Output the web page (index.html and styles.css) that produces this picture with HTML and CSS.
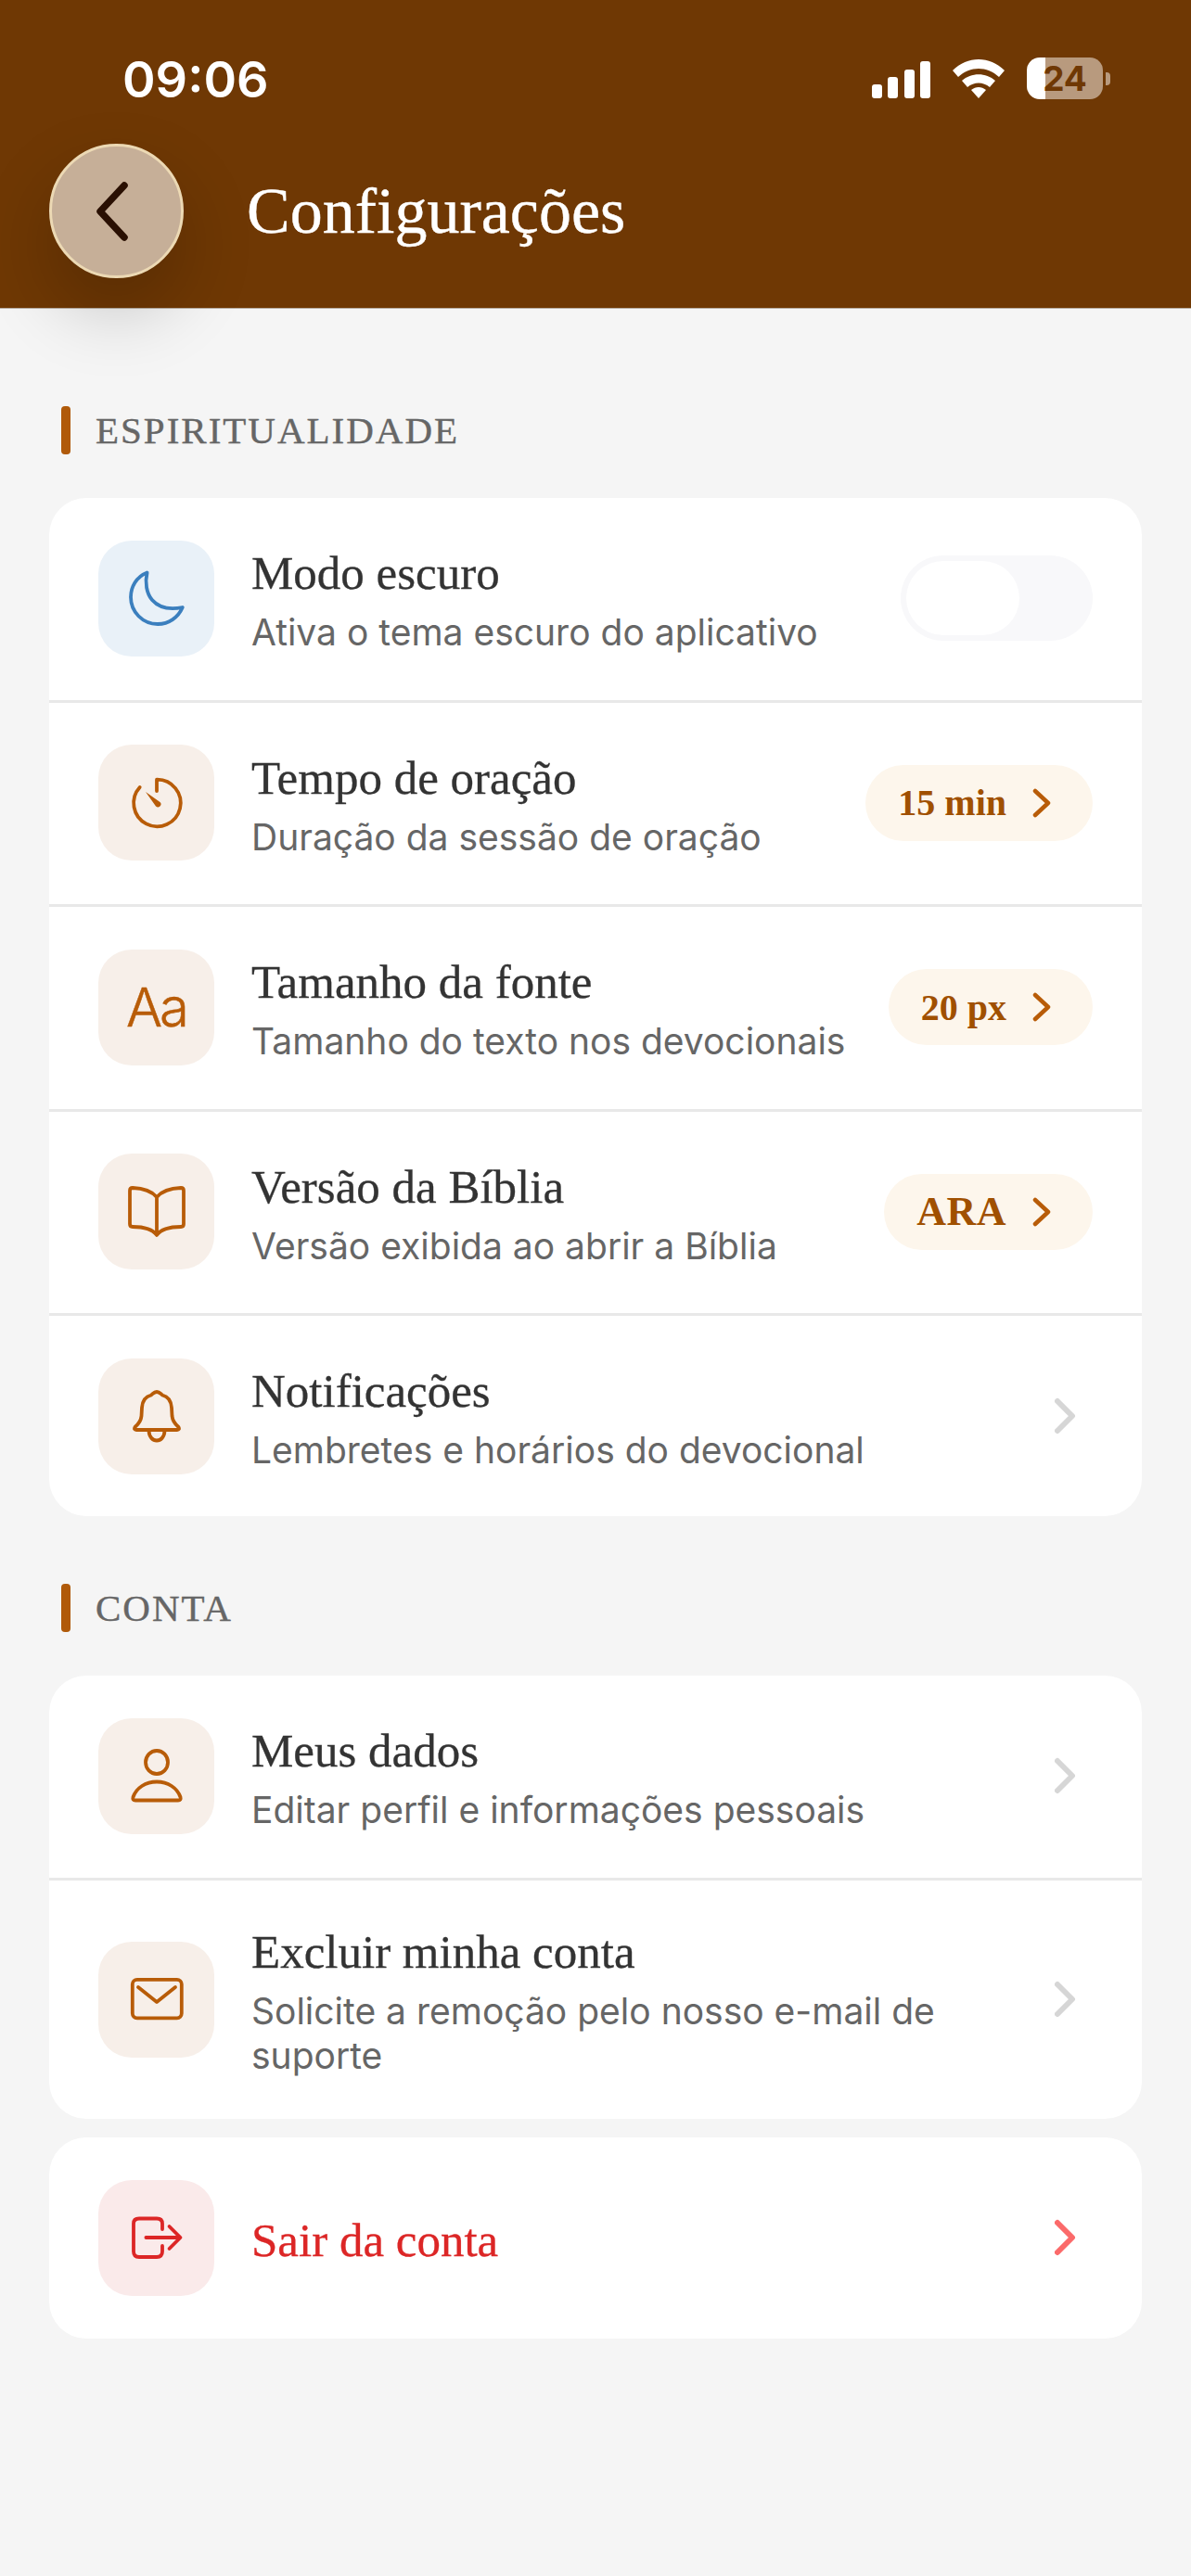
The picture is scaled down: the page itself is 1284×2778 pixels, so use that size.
FILE: index.html

```html
<!DOCTYPE html>
<html lang="pt-BR">
<head>
    <meta charset="UTF-8">
    <meta name="viewport" content="width=device-width, initial-scale=1.0">
    <title>Configurações</title>
    <link rel="stylesheet" href="styles.css">
</head>
<body>

    <header class="header">
        <div class="status-bar">
            <span class="time">09:06</span>
            <div class="status-icons">
                <div class="signal">
                    <span class="bar bar-1"></span>
                    <span class="bar bar-2"></span>
                    <span class="bar bar-3"></span>
                    <span class="bar bar-4"></span>
                </div>
                <svg class="wifi" width="56" height="42" viewBox="0 0 56 42">
                    <path d="M0 12 C16 -4 40 -4 56 12 L50 19 C37 7 19 7 6 19 Z" fill="#fff"/>
                    <path d="M10 23 C20 14 36 14 46 23 L40 30 C33 24 23 24 16 30 Z" fill="#fff"/>
                    <path d="M20 33 C25 29 31 29 36 33 L28 42 Z" fill="#fff"/>
                </svg>
                <div class="battery">
                    <div class="battery-body">24</div>
                    <span class="battery-cap"></span>
                </div>
            </div>
        </div>
        <div class="title-bar">
            <button class="back-btn" type="button">
                <svg class="back-icon" width="44" height="68" viewBox="0 0 44 68">
                    <path d="M35 6 L9 34 L35 62" fill="none" stroke="#2a1003" stroke-width="7.5" stroke-linecap="round" stroke-linejoin="round"/>
                </svg>
            </button>
            <h1>Configurações</h1>
        </div>
    </header>

    <main class="content">
        <div class="section-title"><span class="section-mark"></span>ESPIRITUALIDADE</div>
        <section class="card">
            <div class="row">
                <div class="icon-box blue">
                    <svg class="icon stroke-blue" viewBox="0 0 72 72">
                        <path d="M25.6 8.5 C14 13 8 24 8 35 C8 51 21 64 37 64 C49 64 59 57 63.8 46 C49 49 38 46 31 38 C25 31 23 19 25.6 8.5 Z"/>
                    </svg>
                </div>
                <div class="row-text">
                    <div class="row-title">Modo escuro</div>
                    <div class="row-sub">Ativa o tema escuro do aplicativo</div>
                </div>
                <div class="toggle"><span class="toggle-thumb"></span></div>
            </div>
            <div class="row">
                <div class="icon-box">
                    <svg class="icon" viewBox="0 0 72 72">
                        <path d="M17.7 19 A25.3 25.3 0 1 0 36 10.7 V23"/>
                        <path class="solid" d="M24 24 L39.5 35 A3 3 0 0 1 35 39.5 Z"/>
                    </svg>
                </div>
                <div class="row-text">
                    <div class="row-title">Tempo de oração</div>
                    <div class="row-sub">Duração da sessão de oração</div>
                </div>
                <div class="pill">15 min
                    <svg class="chevron" viewBox="0 0 20 32"><path d="M3 3 L17 16 L3 29"/></svg>
                </div>
            </div>
            <div class="row">
                <div class="icon-box"><span class="aa">Aa</span></div>
                <div class="row-text">
                    <div class="row-title">Tamanho da fonte</div>
                    <div class="row-sub">Tamanho do texto nos devocionais</div>
                </div>
                <div class="pill">20 px
                    <svg class="chevron" viewBox="0 0 20 32"><path d="M3 3 L17 16 L3 29"/></svg>
                </div>
            </div>
            <div class="row">
                <div class="icon-box">
                    <svg class="icon" viewBox="0 0 72 72">
                        <path d="M36 20 C31 14 22 10.5 10 10 Q7 10 7 13 V49 Q7 52 10 52 C22 52 31 54 36 61 C41 54 50 52 62 52 Q65 52 65 49 V13 Q65 10 62 10 C50 10.5 41 14 36 20 Z M36 20 V60"/>
                    </svg>
                </div>
                <div class="row-text">
                    <div class="row-title">Versão da Bíblia</div>
                    <div class="row-sub">Versão exibida ao abrir a Bíblia</div>
                </div>
                <div class="pill pill-caps">ARA
                    <svg class="chevron" viewBox="0 0 20 32"><path d="M3 3 L17 16 L3 29"/></svg>
                </div>
            </div>
            <div class="row">
                <div class="icon-box">
                    <svg class="icon" viewBox="0 0 72 72">
                        <path d="M36 10 C33 10 32 12 30 13.5 C24 15 20.5 20 20 27 L19.5 36 C19 41 16 45 12.5 48 Q11 51 14 51 H58 Q61 51 59.5 48 C56 45 53 41 52.5 36 L52 27 C51.5 20 48 15 42 13.5 C40 12 39 10 36 10 Z"/>
                        <path d="M27.5 52 C28 66 44 66 44.5 52"/>
                    </svg>
                </div>
                <div class="row-text">
                    <div class="row-title">Notificações</div>
                    <div class="row-sub">Lembretes e horários do devocional</div>
                </div>
                <svg class="chevron-end" viewBox="0 0 24 40"><path d="M3 4 L19 20 L3 36"/></svg>
            </div>
        </section>

        <div class="section-title"><span class="section-mark"></span>CONTA</div>
        <section class="card">
            <div class="row">
                <div class="icon-box">
                    <svg class="icon" viewBox="0 0 72 72">
                        <ellipse cx="36" cy="21.5" rx="12" ry="12.5"/>
                        <path d="M13 62.5 H59 Q62.5 62.5 61.5 59 C58 49 48 42.5 36 42.5 C24 42.5 14 49 10.5 59 Q9.5 62.5 13 62.5 Z"/>
                    </svg>
                </div>
                <div class="row-text">
                    <div class="row-title">Meus dados</div>
                    <div class="row-sub">Editar perfil e informações pessoais</div>
                </div>
                <svg class="chevron-end" viewBox="0 0 24 40"><path d="M3 4 L19 20 L3 36"/></svg>
            </div>
            <div class="row row-tall">
                <div class="icon-box">
                    <svg class="icon" viewBox="0 0 72 72">
                        <rect x="9.8" y="14.8" width="53" height="41.5" rx="5"/>
                        <path d="M16 23 L36 39 L56 23"/>
                    </svg>
                </div>
                <div class="row-text">
                    <div class="row-title">Excluir minha conta</div>
                    <div class="row-sub">Solicite a remoção pelo nosso e-mail de suporte</div>
                </div>
                <svg class="chevron-end" viewBox="0 0 24 40"><path d="M3 4 L19 20 L3 36"/></svg>
            </div>
        </section>

        <section class="card card-logout">
            <div class="row">
                <div class="icon-box red">
                    <svg class="icon stroke-red" viewBox="0 0 72 72">
                        <path d="M42 27 V21 Q42 15.5 36 15.5 H17 Q11 15.5 11 21 V51 Q11 57 17 57 H36 Q42 57 42 51 V45"/>
                        <path d="M24.4 36 H61 M49.5 24 L61.5 36 L49.5 48"/>
                    </svg>
                </div>
                <div class="row-text">
                    <div class="row-title logout-text">Sair da conta</div>
                </div>
                <svg class="chevron-end chevron-red" viewBox="0 0 24 40"><path d="M3 4 L19 20 L3 36"/></svg>
            </div>
        </section>
    </main>

</body>
</html>
```

FILE: styles.css

```css
* {
    box-sizing: border-box;
}
body {
    margin: 0;
    background: #f5f5f5;
    font-family: Inter, "Liberation Sans", sans-serif;
    color: #333;
}

/* header */
.header {
    height: 333px;
    background: #6f3804;
    border-bottom: 1px solid #b9aea3;
    color: #fff;
}
.status-bar {
    height: 155px;
    display: flex;
    justify-content: space-between;
    padding: 62px 87px 0 132px;
}
.time {
    margin-top: 1px;
    font-size: 54px;
    font-weight: 600;
    line-height: 46px;
}
.status-icons {
    display: flex;
    align-items: flex-start;
    gap: 24px;
    height: 46px;
}
.signal {
    display: flex;
    align-items: flex-end;
    gap: 6.5px;
    height: 41px;
    margin-top: 3px;
}
.bar {
    width: 11px;
    background: #fff;
    border-radius: 3px;
}
.bar-1 { height: 15px; }
.bar-2 { height: 23px; }
.bar-3 { height: 31px; }
.bar-4 { height: 40px; }
.wifi {
    margin-top: 2px;
}
.battery {
    display: flex;
    align-items: center;
    gap: 3px;
}
.battery-body {
    width: 82px;
    height: 45px;
    border-radius: 14px;
    background: linear-gradient(to right, #fff 24%, #b89a7e 24%);
    color: #6f3804;
    font-size: 37px;
    font-weight: 700;
    line-height: 45px;
    text-align: center;
}
.battery-cap {
    width: 5px;
    height: 14px;
    background: #b89a7e;
    border-radius: 0 4px 4px 0;
}
.title-bar {
    display: flex;
    align-items: center;
    padding-left: 53px;
    gap: 68px;
}
.back-btn {
    width: 145px;
    height: 145px;
    flex-shrink: 0;
    display: flex;
    align-items: center;
    justify-content: center;
    padding: 0;
    border: 3px solid #ecd9b4;
    border-radius: 50%;
    background: #c6af98;
    box-shadow: 0 36px 80px rgba(0, 0, 0, 0.2);
}
.back-icon {
    margin-right: 10px;
}
h1 {
    margin: 0;
    font-family: "Liberation Serif", serif;
    font-size: 70px;
    font-weight: 400;
    -webkit-text-stroke: 0.4px #fff;
}

/* sections */
.content {
    padding: 105px 53px 0;
}
.section-title {
    display: flex;
    align-items: center;
    gap: 27px;
    height: 52px;
    margin: 0 0 47px 13px;
    font-family: "Liberation Serif", serif;
    font-size: 41px;
    letter-spacing: 2px;
    color: #666;
    -webkit-text-stroke: 0.4px #666;
}
.section-mark {
    width: 10px;
    height: 52px;
    background: #b05a0a;
    border-radius: 4px;
}
.card {
    background: #fff;
    border-radius: 40px;
    margin-bottom: 73px;
}
.card-logout {
    margin-top: -53px;
}
.row {
    display: flex;
    align-items: center;
    height: 220.5px;
    padding: 0 53px 1px;
    border-bottom: 3px solid #e8e8e8;
}
.row:last-child {
    height: 216px;
    padding-bottom: 0;
    border-bottom: none;
}
.row-tall:last-child {
    height: 257px;
}
.card-logout .row:last-child {
    height: 217px;
}
.icon-box {
    width: 125px;
    height: 125px;
    flex-shrink: 0;
    display: flex;
    align-items: center;
    justify-content: center;
    background: #f7efe9;
    border-radius: 36px;
}
.icon-box.blue {
    background: #e9f1f8;
}
.icon-box.red {
    background: #faeaea;
}
.icon {
    width: 72px;
    height: 72px;
    fill: none;
    stroke: #b85c08;
    stroke-width: 3.8;
    stroke-linecap: round;
    stroke-linejoin: round;
}
.icon .solid {
    fill: #b85c08;
    stroke: none;
}
.stroke-blue {
    stroke: #3b7fbe;
}
.stroke-red {
    stroke: #dc2626;
}
.aa {
    font-size: 58px;
    font-weight: 300;
    letter-spacing: -3px;
    color: #b85c08;
    -webkit-text-stroke: 0.5px #b85c08;
}
.row-text {
    flex: 1;
    min-width: 0;
    padding: 5px 0 0 40px;
}
.row-title {
    font-family: "Liberation Serif", serif;
    font-size: 51px;
    line-height: 58px;
    color: #333;
    -webkit-text-stroke: 0.3px #333;
}
.row-sub {
    margin-top: 11px;
    font-size: 39px;
    line-height: 48px;
    color: #666;
}
.logout-text {
    color: #dc2626;
    -webkit-text-stroke-color: #dc2626;
}

/* toggle and value pills */
.toggle {
    width: 207px;
    height: 92px;
    flex-shrink: 0;
    padding: 6px;
    background: #f8f8fa;
    border-radius: 46px;
}
.toggle-thumb {
    display: block;
    width: 122px;
    height: 80px;
    background: #fff;
    border-radius: 40px;
}
.pill {
    height: 82px;
    flex-shrink: 0;
    display: flex;
    align-items: center;
    gap: 28px;
    padding: 0 45px 0 35px;
    background: #fdf6ec;
    border-radius: 41px;
    font-family: "Liberation Serif", serif;
    font-size: 40px;
    font-weight: 700;
    color: #a05000;
}
.pill-caps {
    font-size: 44px;
    letter-spacing: 0.5px;
}
.chevron {
    width: 20px;
    height: 32px;
    fill: none;
    stroke: #b85c08;
    stroke-width: 4.5;
    stroke-linecap: round;
    stroke-linejoin: round;
}
.chevron-end {
    width: 24px;
    height: 40px;
    flex-shrink: 0;
    margin-right: 17px;
    margin-left: 20px;
    fill: none;
    stroke: #d6d6d6;
    stroke-width: 6;
    stroke-linecap: round;
    stroke-linejoin: round;
}
.chevron-red {
    stroke: #fb6a6a;
}
```
